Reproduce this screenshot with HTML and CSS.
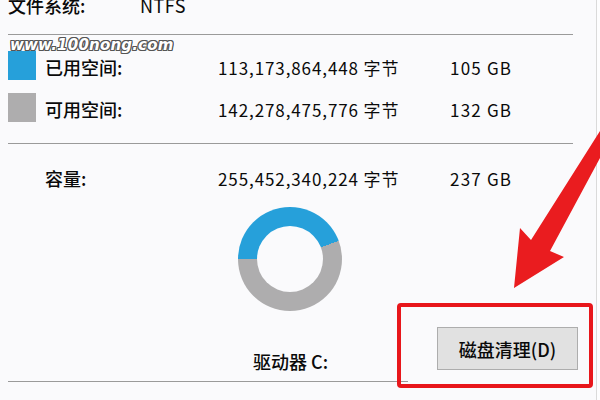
FILE: index.html
```html
<!DOCTYPE html>
<html lang="zh-CN">
<head>
    <meta charset="UTF-8">
    <meta name="viewport" content="width=device-width, initial-scale=1.0">
    <title>本地磁盘 (C:) 属性</title>
    <link rel="stylesheet" href="styles.css">
</head>
<body>
    <div class="panel">
        <div class="fs-row">
            <span class="fs-label">文件系统:</span>
            <span class="fs-value">NTFS</span>
        </div>
        <div class="divider"></div>

        <div class="space-rows">
            <div class="space-row">
                <span class="swatch used"></span>
                <span class="label">已用空间:</span>
                <span class="bytes">113,173,864,448 字节</span>
                <span class="gb">105 GB</span>
            </div>
            <div class="space-row">
                <span class="swatch free"></span>
                <span class="label">可用空间:</span>
                <span class="bytes">142,278,475,776 字节</span>
                <span class="gb">132 GB</span>
            </div>
        </div>
        <div class="divider"></div>

        <div class="space-row capacity">
            <span class="swatch blank"></span>
            <span class="label">容量:</span>
            <span class="bytes">255,452,340,224 字节</span>
            <span class="gb">237 GB</span>
        </div>

        <div class="donut-wrap">
            <div class="donut"></div>
        </div>

        <div class="bottom-row">
            <span class="drive">驱动器 C:</span>
            <button class="cleanup">磁盘清理(D)</button>
        </div>
        <div class="divider short"></div>
    </div>

    <!-- watermark + annotation overlays -->
    <div class="watermark">www.100nong.com</div>
    <div class="highlight-box"></div>
    <svg class="arrow" width="600" height="400" viewBox="0 0 600 400">
        <polygon points="600,131 600,158 550,251 564,257 514,288 520,228 531,240" fill="#ea1c1f"/>
    </svg>
</body>
</html>
```

FILE: styles.css
```css
body {
    margin: 0;
    width: 600px;
    height: 400px;
    overflow: hidden;
    background-color: #fdfdfe;
    font-family: "Noto Sans CJK SC", "Noto Sans", sans-serif;
    font-weight: 500;
    color: #0a0a0a;
}
.panel {
    width: 596px;
    height: 400px;
    border-right: 1px solid #dadada;
    background-color: #fafafc;
    overflow: hidden;
}
.fs-row {
    display: flex;
    align-items: center;
    height: 24px;
    margin-top: -7px;
    margin-bottom: 17px;
    padding-left: 8px;
    font-size: 18px;
}
.fs-label {
    width: 132px;
}
.fs-value {
    font-weight: 400;
    letter-spacing: 0.5px;
}
.divider {
    margin-left: 8px;
    width: 565px;
    height: 1px;
    background-color: #9a9a9a;
}
.divider.short {
    width: 400px;
}
.space-rows {
    display: flex;
    flex-direction: column;
    gap: 13px;
    padding-top: 16px;
    padding-bottom: 21px;
}
.space-row {
    display: flex;
    align-items: center;
    padding-left: 8px;
    font-size: 18px;
    height: 29px;
}
.swatch {
    width: 28px;
    height: 29px;
    margin-right: 9px;
    flex-shrink: 0;
}
.swatch.used {
    background-color: #26a0da;
}
.swatch.free {
    background-color: #aeadae;
}
.swatch.blank {
    height: 1px;
}
.label {
    width: 173px;
    padding-top: 3px;
}
.bytes {
    width: 232px;
    padding-top: 3px;
    font-size: 17px;
    font-weight: 400;
    letter-spacing: 0.9px;
}
.gb {
    padding-top: 3px;
    font-size: 17px;
    font-weight: 400;
    letter-spacing: 1.2px;
}
.capacity {
    margin-top: 18px;
}
.donut-wrap {
    display: flex;
    padding-left: 238px;
    margin-top: 16px;
}
.donut {
    position: relative;
    width: 104px;
    height: 104px;
    border-radius: 50%;
    background: conic-gradient(from 270deg, #26a0da 0 44.3%, #aeadae 44.3% 100%);
}
.donut::after {
    content: "";
    position: absolute;
    top: 19px;
    left: 19px;
    width: 66px;
    height: 66px;
    border-radius: 50%;
    background-color: #fafafc;
}
.bottom-row {
    display: flex;
    align-items: flex-start;
    height: 70px;
}
.drive {
    margin-left: 253px;
    margin-top: 38px;
    width: 184px;
    font-size: 18px;
    line-height: 24px;
}
.cleanup {
    margin-top: 16px;
    width: 141px;
    height: 43px;
    border: 1px solid #adadad;
    background-color: #e1e1e1;
    font-family: "Noto Sans CJK SC", "Noto Sans", sans-serif;
    font-weight: 500;
    font-size: 18px;
    color: #0a0a0a;
    padding: 0;
}
.watermark {
    position: absolute;
    left: 10px;
    top: 36px;
    font-family: "DejaVu Sans", sans-serif;
    font-weight: bold;
    font-style: italic;
    font-size: 15px;
    letter-spacing: 0.2px;
    color: #fff;
    text-shadow: 1px 0 0 #555, -1px 0 0 #555, 0 1px 0 #555, 0 -1px 0 #555, 1px 1px 0 #555, -1px -1px 0 #555, 1px -1px 0 #555, -1px 1px 0 #555;
}
.highlight-box {
    position: absolute;
    left: 397px;
    top: 303px;
    width: 188px;
    height: 77px;
    border: 4px solid #e8161b;
    border-radius: 4px;
}
.arrow {
    position: absolute;
    left: 0;
    top: 0;
}
```
